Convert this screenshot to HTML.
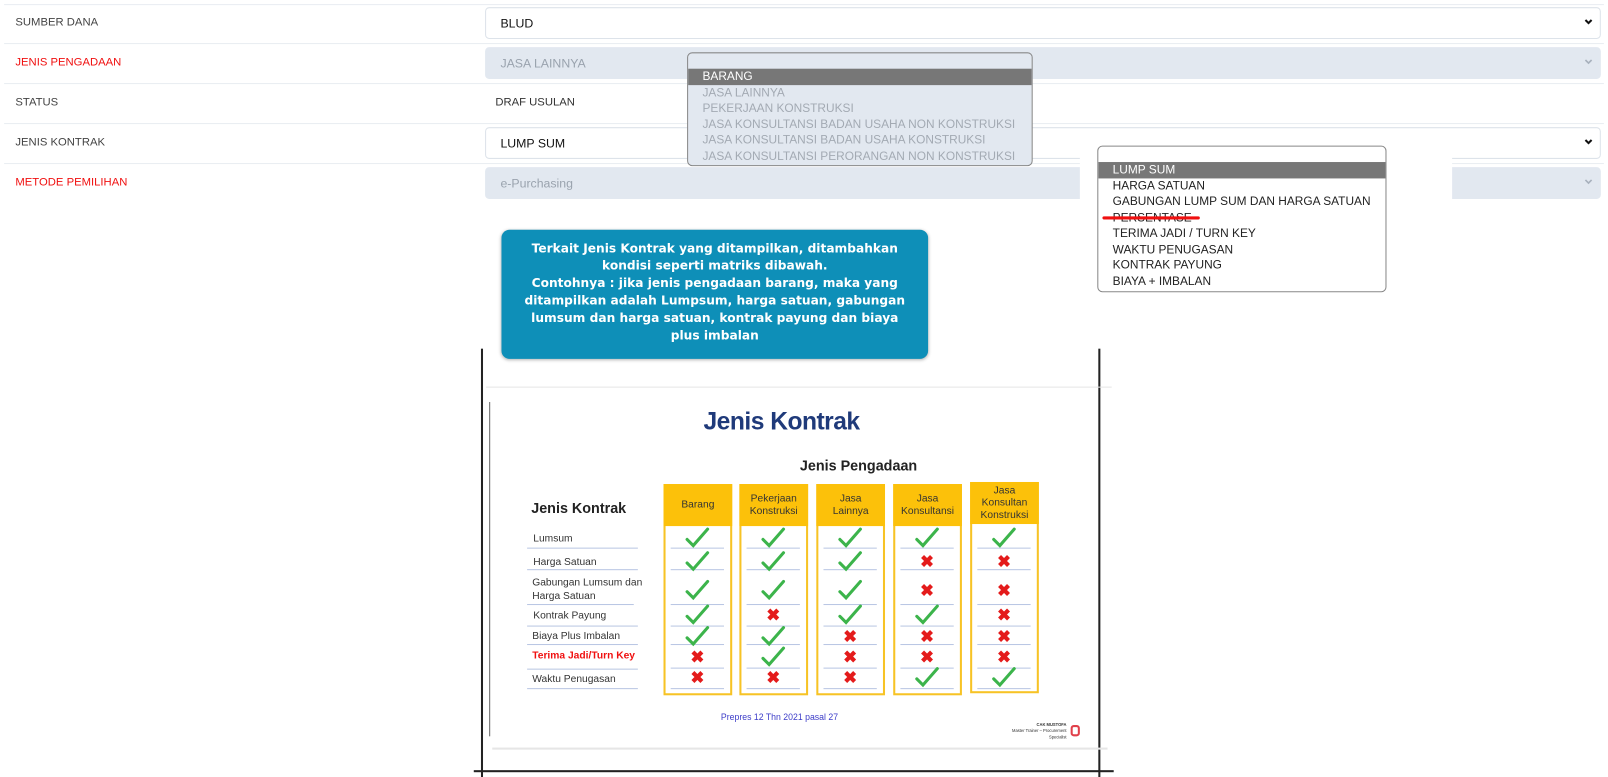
<!DOCTYPE html>
<html><head><meta charset="utf-8"><style>
*{margin:0;padding:0;box-sizing:border-box}
html,body{width:1608px;height:777px;overflow:hidden;background:#fff;font-family:"Liberation Sans",sans-serif}
#w{position:absolute;left:0;top:0;width:1568px;height:758px;transform:scale(1.02551);transform-origin:0 0}
.a{position:absolute}
.sep{position:absolute;left:4px;width:1560px;height:1px;background:#e9edf2}
.lbl{position:absolute;left:15px;font-size:11px;color:#444}
.red{color:#f01010}
.sel{position:absolute;left:473px;width:1088px;height:31px;border:1px solid #dde3ea;border-radius:4px;font-size:12px;padding:8px 14px;color:#111;background:#fff}
.dis{background:#e2e8f0;border-color:#e2e8f0;color:#9aa3ae}
.chev{position:absolute;right:6px;top:8px;width:10px;height:10px}
.dd{position:absolute;font-size:11.6px;line-height:15.5px}
.dd div{padding-left:14px;white-space:nowrap}
.col{position:absolute;top:472px;width:67px;height:206px;border:2px solid #f7c325;background:#fff}
.hd{position:absolute;top:472px;width:67px;height:41px;background:#fcc10a;font-size:10px;color:#333;text-align:center;display:flex;align-items:center;justify-content:center;line-height:12px}
.rl{position:absolute;font-size:10px;color:#333}
.ln{position:absolute;height:1px;background:#b9c6e3}
.ck{position:absolute;width:30px;height:24px}
.x{position:absolute;color:#e41b1b;font-size:16px;line-height:16px;font-weight:bold;width:30px;text-align:center}
</style></head><body><div id="w">
<div class="sep" style="top:4px"></div>
<div class="sep" style="top:42px"></div>
<div class="sep" style="top:81px"></div>
<div class="sep" style="top:120px"></div>
<div class="sep" style="top:159px"></div>

<div class="lbl" style="top:16px">SUMBER DANA</div>
<div class="lbl red" style="top:55px">JENIS PENGADAAN</div>
<div class="lbl" style="top:94px">STATUS</div>
<div class="lbl" style="top:133px">JENIS KONTRAK</div>
<div class="lbl red" style="top:172px">METODE PEMILIHAN</div>

<div class="sel" style="top:7px">BLUD<svg class="chev" viewBox="0 0 10 10"><path d="M2 3.5L5 6.5L8 3.5" stroke="#111" stroke-width="2" fill="none"/></svg></div>
<div class="sel dis" style="top:46px">JASA LAINNYA<svg class="chev" viewBox="0 0 10 10"><path d="M2 3.5L5 6.5L8 3.5" stroke="#a8b1bd" stroke-width="1.6" fill="none"/></svg></div>
<div class="a" style="left:483px;top:94px;font-size:11px;color:#333">DRAF USULAN</div>
<div class="sel" style="top:124px">LUMP SUM<svg class="chev" viewBox="0 0 10 10"><path d="M2 3.5L5 6.5L8 3.5" stroke="#111" stroke-width="2" fill="none"/></svg></div>
<div class="sel dis" style="top:163px;color:#9aa3ae">e-Purchasing<svg class="chev" viewBox="0 0 10 10"><path d="M2 3.5L5 6.5L8 3.5" stroke="#a8b1bd" stroke-width="1.6" fill="none"/></svg></div>

<div class="dd" style="left:670px;top:51px;width:337px;height:111px;background:#e2e8f0;border:1px solid #888;border-radius:5px;padding-top:15px;color:#a3aab3;overflow:hidden">
<div style="background:#777;color:#fff">BARANG</div>
<div>JASA LAINNYA</div><div>PEKERJAAN KONSTRUKSI</div><div>JASA KONSULTANSI BADAN USAHA NON KONSTRUKSI</div><div>JASA KONSULTANSI BADAN USAHA KONSTRUKSI</div><div>JASA KONSULTANSI PERORANGAN NON KONSTRUKSI</div>
</div>

<div class="a" style="left:1053px;top:140px;width:363px;height:150px;background:#fff"></div>
<div class="dd" style="left:1070px;top:142px;width:282px;height:143px;background:#fff;border:1px solid #888;border-radius:5px;padding-top:15px;color:#222;overflow:hidden">
<div style="background:#777;color:#fff">LUMP SUM</div>
<div>HARGA SATUAN</div><div>GABUNGAN LUMP SUM DAN HARGA SATUAN</div><div>PERSENTASE</div><div>TERIMA JADI / TURN KEY</div><div>WAKTU PENUGASAN</div><div>KONTRAK PAYUNG</div><div>BIAYA + IMBALAN</div>
</div>
<div class="a" style="left:1075px;top:211px;width:95px;height:3px;background:#f01010;border-radius:2px"></div>

<div class="a" style="left:489px;top:224px;width:416px;height:126px;background:#0e8fb8;border-radius:8px;box-shadow:0 1px 3px rgba(0,0,0,.3);color:#fff;font-weight:bold;font-family:'DejaVu Sans',sans-serif;font-size:11.9px;line-height:17px;text-align:center;padding-top:10px">Terkait Jenis Kontrak yang ditampilkan, ditambahkan<br>kondisi seperti matriks dibawah.<br>Contohnya : jika jenis pengadaan barang, maka yang<br>ditampilkan adalah Lumpsum, harga satuan, gabungan<br>lumsum dan harga satuan, kontrak payung dan biaya<br>plus imbalan</div>

<div class="a" style="left:469px;top:340px;width:2px;height:418px;background:#222"></div>
<div class="a" style="left:1071px;top:340px;width:2px;height:418px;background:#222"></div>
<div class="a" style="left:462px;top:751px;width:624px;height:2px;background:#222"></div>
<div class="a" style="left:474px;top:377px;width:610px;height:1px;background:#e6e6e6"></div>
<div class="a" style="left:480px;top:729px;width:600px;height:2px;background:#e6e6e6"></div>
<div class="a" style="left:477px;top:392px;width:1px;height:326px;background:#666"></div>

<div class="a" style="left:686px;top:398px;font-size:24px;font-weight:bold;color:#1f3a7a;letter-spacing:-0.5px">Jenis Kontrak</div>
<div class="a" style="left:780px;top:446px;font-size:14px;font-weight:bold;color:#222">Jenis Pengadaan</div>
<div class="a" style="left:518px;top:487px;font-size:14px;font-weight:bold;color:#222">Jenis Kontrak</div>

<div class="col" style="left:647px"></div><div class="col" style="left:721px"></div><div class="col" style="left:796px"></div><div class="col" style="left:871px"></div><div class="col" style="left:946px;top:470px"></div>
<div class="hd" style="left:647px">Barang</div>
<div class="hd" style="left:721px">Pekerjaan<br>Konstruksi</div>
<div class="hd" style="left:796px">Jasa<br>Lainnya</div>
<div class="hd" style="left:871px">Jasa<br>Konsultansi</div>
<div class="hd" style="left:946px;top:470px">Jasa<br>Konsultan<br>Konstruksi</div>

<div class="rl" style="left:520px;top:520px">Lumsum</div>
<div class="rl" style="left:520px;top:543px">Harga Satuan</div>
<div class="rl" style="left:519px;top:562px;line-height:13px">Gabungan Lumsum dan<br>Harga Satuan</div>
<div class="rl" style="left:520px;top:595px">Kontrak Payung</div>
<div class="rl" style="left:519px;top:615px">Biaya Plus Imbalan</div>
<div class="rl" style="left:519px;top:634px;color:#f01010;font-weight:bold">Terima Jadi/Turn Key</div>
<div class="rl" style="left:519px;top:657px">Waktu Penugasan</div>
<div class="ln" style="left:514px;top:534px;width:108px"></div>
<div class="ln" style="left:514px;top:555px;width:108px"></div>
<div class="ln" style="left:514px;top:589px;width:104px"></div>
<div class="ln" style="left:514px;top:610px;width:108px"></div>
<div class="ln" style="left:514px;top:628px;width:108px"></div>
<div class="ln" style="left:514px;top:652px;width:108px"></div>
<div class="ln" style="left:514px;top:671px;width:108px"></div>

<div id="m"></div>
<script>
var cols=[668,742,817,892,967],ys=[513,536,564,588,609,629,649],lys=[534,555,589,610,628,651,671];
var M=["CCCCCXX","CCCXCCX","CCCCXXX","CXXCXXC","CXXXXXC"];
var h="";
for(var c=0;c<5;c++){for(var r=0;r<7;r++){
h+='<div class="ln" style="left:'+(cols[c]-14)+'px;top:'+lys[r]+'px;width:52px"></div>';
if(M[c][r]=="C")h+='<svg class="ck" style="left:'+(cols[c]-3)+'px;top:'+ys[r]+'px" viewBox="0 0 30 24"><path d="M5 13 L11 19 L25 3" stroke="#3cb44b" stroke-width="3" fill="none" stroke-linecap="round"/></svg>';
else h+='<div class="x" style="left:'+(cols[c]-3)+'px;top:'+(ys[r]+5)+'px">&#10006;</div>';}}
document.getElementById("m").innerHTML=h;
</script>

<div class="a" style="left:703px;top:694px;font-size:8.5px;color:#3c3cc8">Prepres 12 Thn 2021 pasal 27</div>
<div class="a" style="left:980px;top:704px;font-size:4px;color:#333;text-align:right;width:60px;line-height:6px"><b>CAK MUSTOFA</b><br>Master Trainer – Procurement Specialist</div>
<div class="a" style="left:1044px;top:707px;width:9px;height:11px;border:2px solid #e0404a;border-radius:3px"></div>
</div></body></html>
